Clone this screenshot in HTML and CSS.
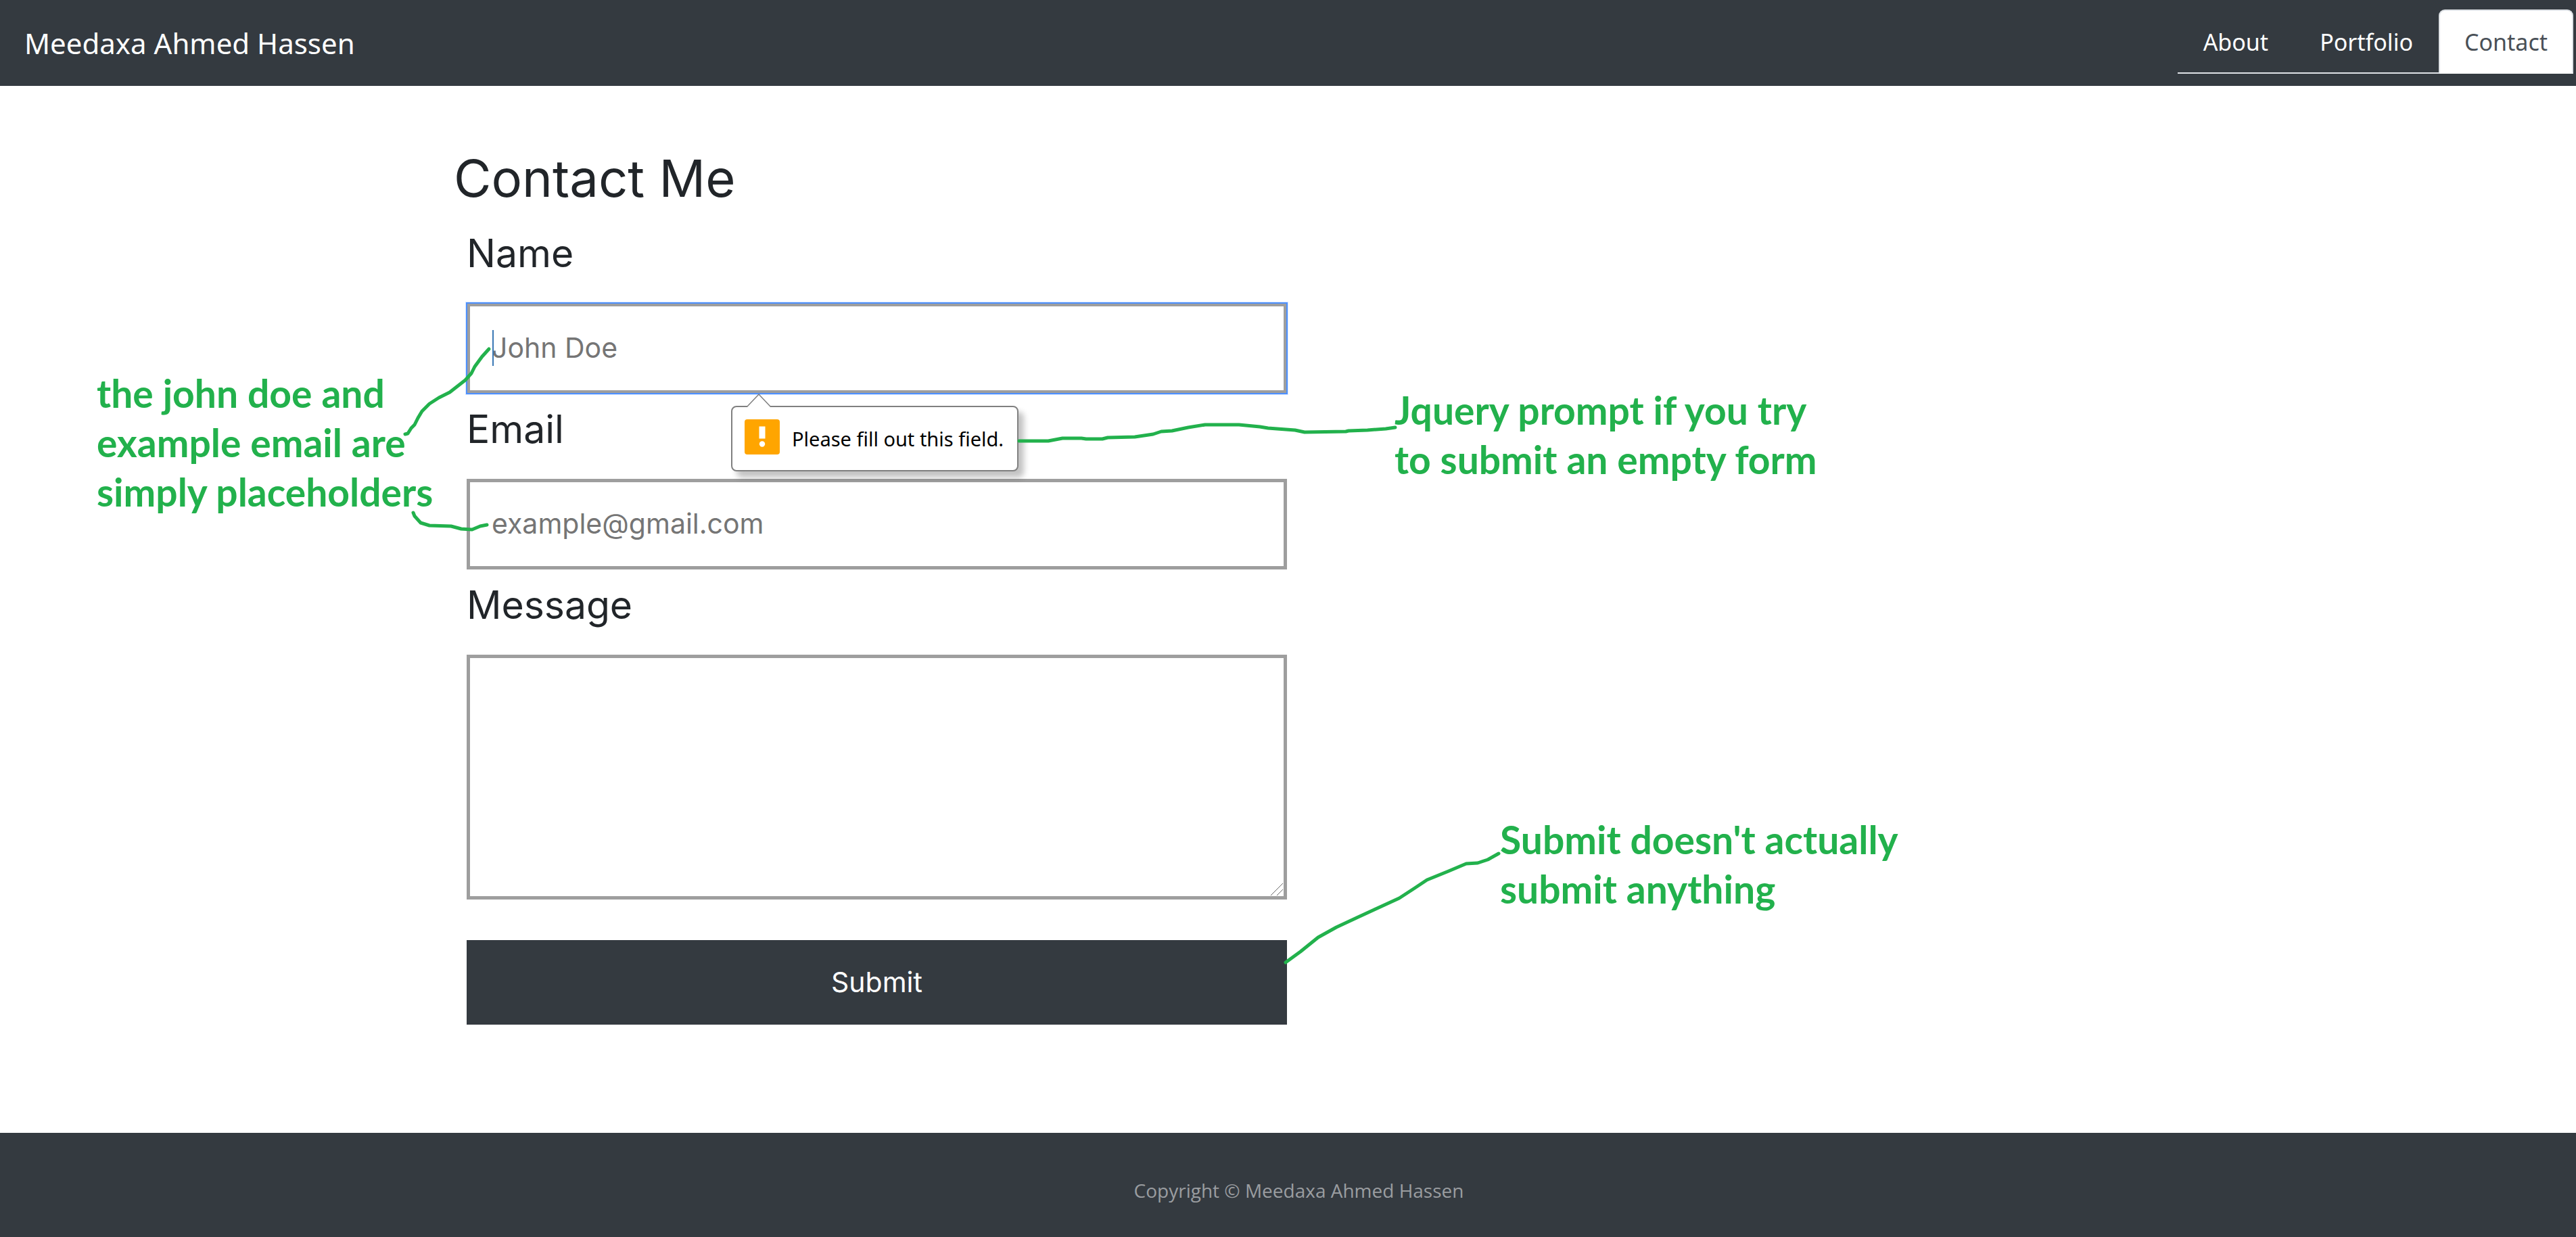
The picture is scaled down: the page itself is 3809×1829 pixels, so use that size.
FILE: index.html
```html
<!DOCTYPE html>
<html lang="en">
<head>
  <meta charset="utf-8">
  <meta name="viewport" content="width=device-width, initial-scale=1">
  <title>Contact - Meedaxa Ahmed Hassen</title>
  <link rel="stylesheet" href="styles.css">
</head>
<body>
  <header class="navbar">
    <a class="brand" href="#">Meedaxa Ahmed Hassen</a>
    <nav class="tabs">
      <a class="tab" href="#about">About</a>
      <a class="tab" href="#portfolio">Portfolio</a>
      <a class="tab tab-active" href="#contact">Contact</a>
    </nav>
  </header>

  <main class="content">
    <h1 class="title">Contact Me</h1>
    <form class="form" action="#" novalidate>
      <label class="label" for="name">Name</label>
      <div class="field">
        <input class="input input-focused" id="name" type="text" placeholder="John Doe">
        <span class="caret"></span>
        <div class="tooltip" role="alert">
          <svg class="tooltip-arrow" viewBox="0 0 38 20" aria-hidden="true">
            <path d="M1 20 L19 1 L37 20" fill="#fff" stroke="#808080" stroke-width="1.5"/>
          </svg>
          <svg class="tooltip-icon" viewBox="0 0 52 52" aria-hidden="true">
            <rect width="52" height="52" rx="4" fill="#ffa500"/>
            <rect x="21.500" y="10.500" width="9" height="18" fill="#fff"/>
            <circle cx="26" cy="36.500" r="4.200" fill="#fff"/>
          </svg>
          <span class="tooltip-text">Please fill out this field.</span>
        </div>
      </div>

      <label class="label" for="email">Email</label>
      <div class="field">
        <input class="input" id="email" type="email" placeholder="example@gmail.com">
      </div>

      <label class="label" for="message">Message</label>
      <div class="field">
        <textarea class="input textarea" id="message"></textarea>
        <svg class="grip" viewBox="0 0 18 18" aria-hidden="true">
          <path d="M0 18 L18 0 M9 18 L18 9" fill="none" stroke="#6b6b6b" stroke-width="1"/>
        </svg>
      </div>

      <button class="submit" type="submit">Submit</button>
    </form>
  </main>

  <footer class="footer">Copyright © Meedaxa Ahmed Hassen</footer>

  <aside class="notes">
    <svg class="lines" aria-hidden="true">
      <path d="M599 642 L603 641 L608 633 L613 628 L618 618 L624 608 L635 597 L649 588 L665 580 L688 562 L697 552 L702 542 L713 527 L723 516"/>
      <path d="M611 758 L613 763 L622 773 L635 777 L667 778 L682 782 L698 783 L710 778 L720 776"/>
      <path d="M1507 652 L1550 652 L1571 648 L1599 648 L1606 649 L1630 649 L1638 647 L1678 646 L1705 642 L1717 638 L1733 637 L1757 632 L1782 628 L1832 628 L1863 631 L1875 633 L1915 636 L1929 639 L1990 638 L1994 637 L2022 636 L2049 634 L2063 632"/>
      <path d="M1901 1423 L1923 1407 L1949 1386 L1976 1371 L2006 1357 L2032 1345 L2069 1328 L2092 1313 L2110 1301 L2142 1288 L2168 1277 L2185 1276 L2200 1271 L2216 1262"/>
    </svg>
    <p class="note note-placeholders">the john doe and<br>example email are<br>simply placeholders</p>
    <p class="note note-prompt">Jquery prompt if you try<br>to submit an empty form</p>
    <p class="note note-submit">Submit doesn't actually<br>submit anything</p>
  </aside>
</body>
</html>
```
FILE: styles.css
```css
* {
  box-sizing: border-box;
}

body {
  position: relative;
  display: flex;
  flex-direction: column;
  min-height: 100vh;
  margin: 0;
  background: #fff;
  color: #212529;
  font-family: "Noto Sans", "Open Sans", sans-serif;
}

/* Top bar */
.navbar {
  display: flex;
  align-items: center;
  justify-content: space-between;
  padding: 14px 4px 18px 36px;
  background: #343a40;
}

.brand {
  padding-top: 4px;
  color: #fff;
  font-size: 42px;
  line-height: 60px;
  text-decoration: none;
}

.tabs {
  display: flex;
  border-bottom: 2px solid #dee2e6;
}

.tab {
  margin-bottom: -2px;
  padding: 19px 36px 17px;
  border: 2px solid transparent;
  border-radius: 9px 9px 0 0;
  color: #fff;
  font-size: 34px;
  line-height: 55px;
  text-decoration: none;
}

.tab-active {
  border-color: #dee2e6 #dee2e6 #fff;
  background: #fff;
  color: #495057;
}

/* Contact form */
.content {
  padding: 90px 36px 159px 671px;
  font-family: Inter, sans-serif;
}

.title {
  margin: 0 0 24px;
  font-size: 76px;
  font-weight: 400;
  line-height: 92px;
}

.form {
  display: flex;
  flex-direction: column;
  max-width: 1232px;
  padding-left: 19px;
}

.label {
  margin-bottom: 31px;
  font-size: 57px;
  line-height: 84px;
}

.field {
  position: relative;
  display: flex;
  margin-bottom: 11px;
}

.input {
  width: 100%;
  height: 134px;
  padding: 0 32px 2px;
  border: 5px solid #9e9e9e;
  border-radius: 0;
  outline: none;
  background: #fff;
  color: #212529;
  font-family: inherit;
  font-size: 41px;
}

.input::placeholder {
  color: #757575;
  opacity: 1;
}

.input-focused {
  outline: 2px solid #4d90fe;
  outline-offset: -1px;
  box-shadow: 0 0 0 2px rgba(77, 144, 254, 0.2);
}

.textarea {
  height: 362px;
  padding: 31px;
  resize: none;
}

.caret {
  position: absolute;
  top: 40px;
  left: 38px;
  width: 2px;
  height: 53px;
  background: #3a78b5;
}

.grip {
  position: absolute;
  right: 6px;
  bottom: 6px;
  width: 18px;
  height: 18px;
}

.submit {
  margin-top: 49px;
  padding: 36px;
  border: 0;
  background: #343a40;
  color: #fff;
  font-family: inherit;
  font-size: 41px;
  line-height: 53px;
}

/* Validation bubble */
.tooltip {
  position: absolute;
  z-index: 1;
  top: 152px;
  left: 391px;
  display: flex;
  gap: 18px;
  padding: 18px 20px 17px 18px;
  border: 2px solid #808080;
  border-radius: 8px;
  background: #fff;
  box-shadow: 8px 9px 8px rgba(0, 0, 0, 0.24);
  color: #000;
  font-family: "Noto Sans", "Open Sans", sans-serif;
  font-size: 29px;
  line-height: 58px;
  white-space: nowrap;
}

.tooltip-arrow {
  position: absolute;
  top: -20px;
  left: 20px;
  width: 38px;
  height: 20px;
}

.tooltip-icon {
  width: 52px;
  height: 52px;
}

/* Footer */
.footer {
  margin-top: auto;
  padding: 64px 0 48px 32px;
  background: #343a40;
  color: #9a9da0;
  font-family: "Open Sans", "Noto Sans", sans-serif;
  font-size: 28px;
  line-height: 42px;
  text-align: center;
}

/* Hand-drawn notes over the page */
.notes {
  position: absolute;
  z-index: 2;
  inset: 0;
  overflow: hidden;
  pointer-events: none;
}

.lines {
  width: 100%;
  height: 100%;
  fill: none;
  stroke: #22b14c;
  stroke-width: 5;
  stroke-linecap: round;
  stroke-linejoin: round;
}

.note {
  position: absolute;
  margin: 0;
  color: #22b14c;
  font-family: Lato, sans-serif;
  font-size: 57px;
  font-weight: 700;
  line-height: 73px;
  white-space: nowrap;
}

.note-placeholders {
  top: 545px;
  left: 143px;
}

.note-prompt {
  top: 570px;
  left: 2062px;
}

.note-submit {
  top: 1205px;
  left: 2218px;
}
```
